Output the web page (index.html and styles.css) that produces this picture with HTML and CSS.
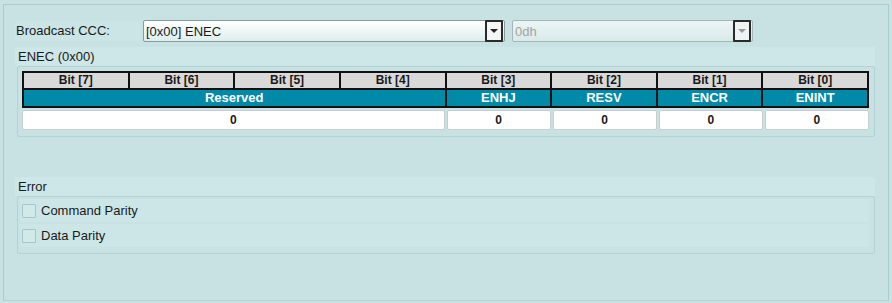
FILE: index.html
```html
<!DOCTYPE html>
<html lang="en">
  <head>
    <meta charset="UTF-8" />
    <title>Broadcast CCC</title>
    <link rel="stylesheet" href="styles.css">
  </head>
  <body>
    <div class="panel">
      <div class="top_row">
        <div class="top_label">Broadcast CCC:</div>
        <div class="combo">
          <span class="combo_text">[0x00] ENEC</span>
          <span class="combo_btn"><span class="tri"></span></span>
        </div>
        <div class="combo combo_off">
          <span class="combo_text">0dh</span>
          <span class="combo_btn"><span class="tri"></span></span>
        </div>
      </div>

      <div class="sec_label">ENEC (0x00)</div>
      <div class="group group_reg">
        <table class="reg">
          <tr class="bits">
            <td>Bit [7]</td>
            <td>Bit [6]</td>
            <td>Bit [5]</td>
            <td>Bit [4]</td>
            <td>Bit [3]</td>
            <td>Bit [2]</td>
            <td>Bit [1]</td>
            <td>Bit [0]</td>
          </tr>
          <tr class="names">
            <td colspan="4">Reserved</td>
            <td>ENHJ</td>
            <td>RESV</td>
            <td>ENCR</td>
            <td>ENINT</td>
          </tr>
        </table>
        <div class="vals">
          <div class="val wide">0</div>
          <div class="val">0</div>
          <div class="val">0</div>
          <div class="val">0</div>
          <div class="val">0</div>
        </div>
      </div>

      <div class="sec_label sec_error">Error</div>
      <div class="group group_err">
        <div class="chk_row">
          <span class="chk"></span>
          <span>Command Parity</span>
        </div>
        <div class="chk_row">
          <span class="chk"></span>
          <span>Data Parity</span>
        </div>
      </div>
    </div>
  </body>
</html>
```

FILE: styles.css
```css
body {
  margin: 0;
  background: #c8e2e3;
  font-family: "Liberation Sans", Arial, sans-serif;
  font-size: 13px;
  color: #1a1a1a;
}

.panel {
  margin: 4px 3px 0 3px;
  height: 297px;
  box-sizing: border-box;
  border: 1px solid #a9cdce;
  border-bottom-color: #b3d3d4;
  padding: 15px 13px 0 11px;
}

.top_row {
  display: flex;
  align-items: center;
  height: 22px;
}

.top_label {
  width: 124px;
  padding-left: 1px;
  margin-right: 3px;
  height: 20px;
  line-height: 20px;
  background: #cbe5e6;
}

.combo {
  display: flex;
  align-items: center;
  width: 362px;
  height: 22px;
  box-sizing: border-box;
  border: 1px solid #8a9a9b;
  border-radius: 2px;
  background: linear-gradient(to bottom, #ffffff, #ddeeed);
}

.combo_text {
  flex: 1;
  padding-left: 2px;
}

.combo_btn {
  width: 14px;
  height: 18px;
  margin-right: 1px;
  border: 2px solid #2a2a2a;
  border-radius: 1px;
  background: #f4f6f6;
  display: flex;
  align-items: center;
  justify-content: center;
}

.tri {
  width: 0;
  height: 0;
  border-left: 4px solid transparent;
  border-right: 4px solid transparent;
  border-top: 4px solid #222;
}

.combo_off {
  width: 241px;
  margin-left: 7px;
  border-color: #a4b6b7;
  color: #a3a3a3;
  background: linear-gradient(to bottom, #ecf5f5, #d8eaea);
}

.combo_off .combo_btn {
  background: #eef3f3;
}

.combo_off .tri {
  border-top-color: #9a9a9a;
}

.sec_label {
  margin-top: 5px;
  height: 19px;
  line-height: 19px;
  padding-left: 3px;
  background: #cde6e7;
}

.sec_error {
  margin-top: 40px;
}

.group {
  margin-left: 2px;
  border: 1px solid #b2d2d3;
  border-radius: 2px;
}

.group_reg {
  padding: 4px 5px 6px 4px;
}

.reg {
  width: 100%;
  border-collapse: collapse;
  table-layout: fixed;
}

.reg td {
  border: 2px solid #111;
  text-align: center;
  font-weight: bold;
  padding: 0;
}

.bits td {
  background: #d9d9d9;
  height: 15px;
  line-height: 15px;
  font-size: 12px;
}

.names td {
  background: #008aa8;
  color: #ffffff;
  height: 16px;
  line-height: 16px;
}

.vals {
  display: grid;
  grid-template-columns: repeat(8, 1fr);
  gap: 2px;
  margin-top: 2px;
}

.val {
  height: 18px;
  line-height: 18px;
  background: #ffffff;
  border: 1px solid #c9cfcf;
  border-radius: 2px;
  text-align: center;
  font-weight: bold;
  font-size: 12px;
}

.wide {
  grid-column: span 4;
}

.group_err {
  padding: 2px 5px 4px 2px;
}

.chk_row {
  display: flex;
  align-items: center;
  height: 23px;
  margin-bottom: 2px;
  background: #cce6e7;
}

.chk {
  width: 12px;
  height: 12px;
  margin: 0 5px 0 2px;
  border: 1px solid #a7c6c7;
  border-radius: 1px;
  background: #d2e9ea;
}
```
